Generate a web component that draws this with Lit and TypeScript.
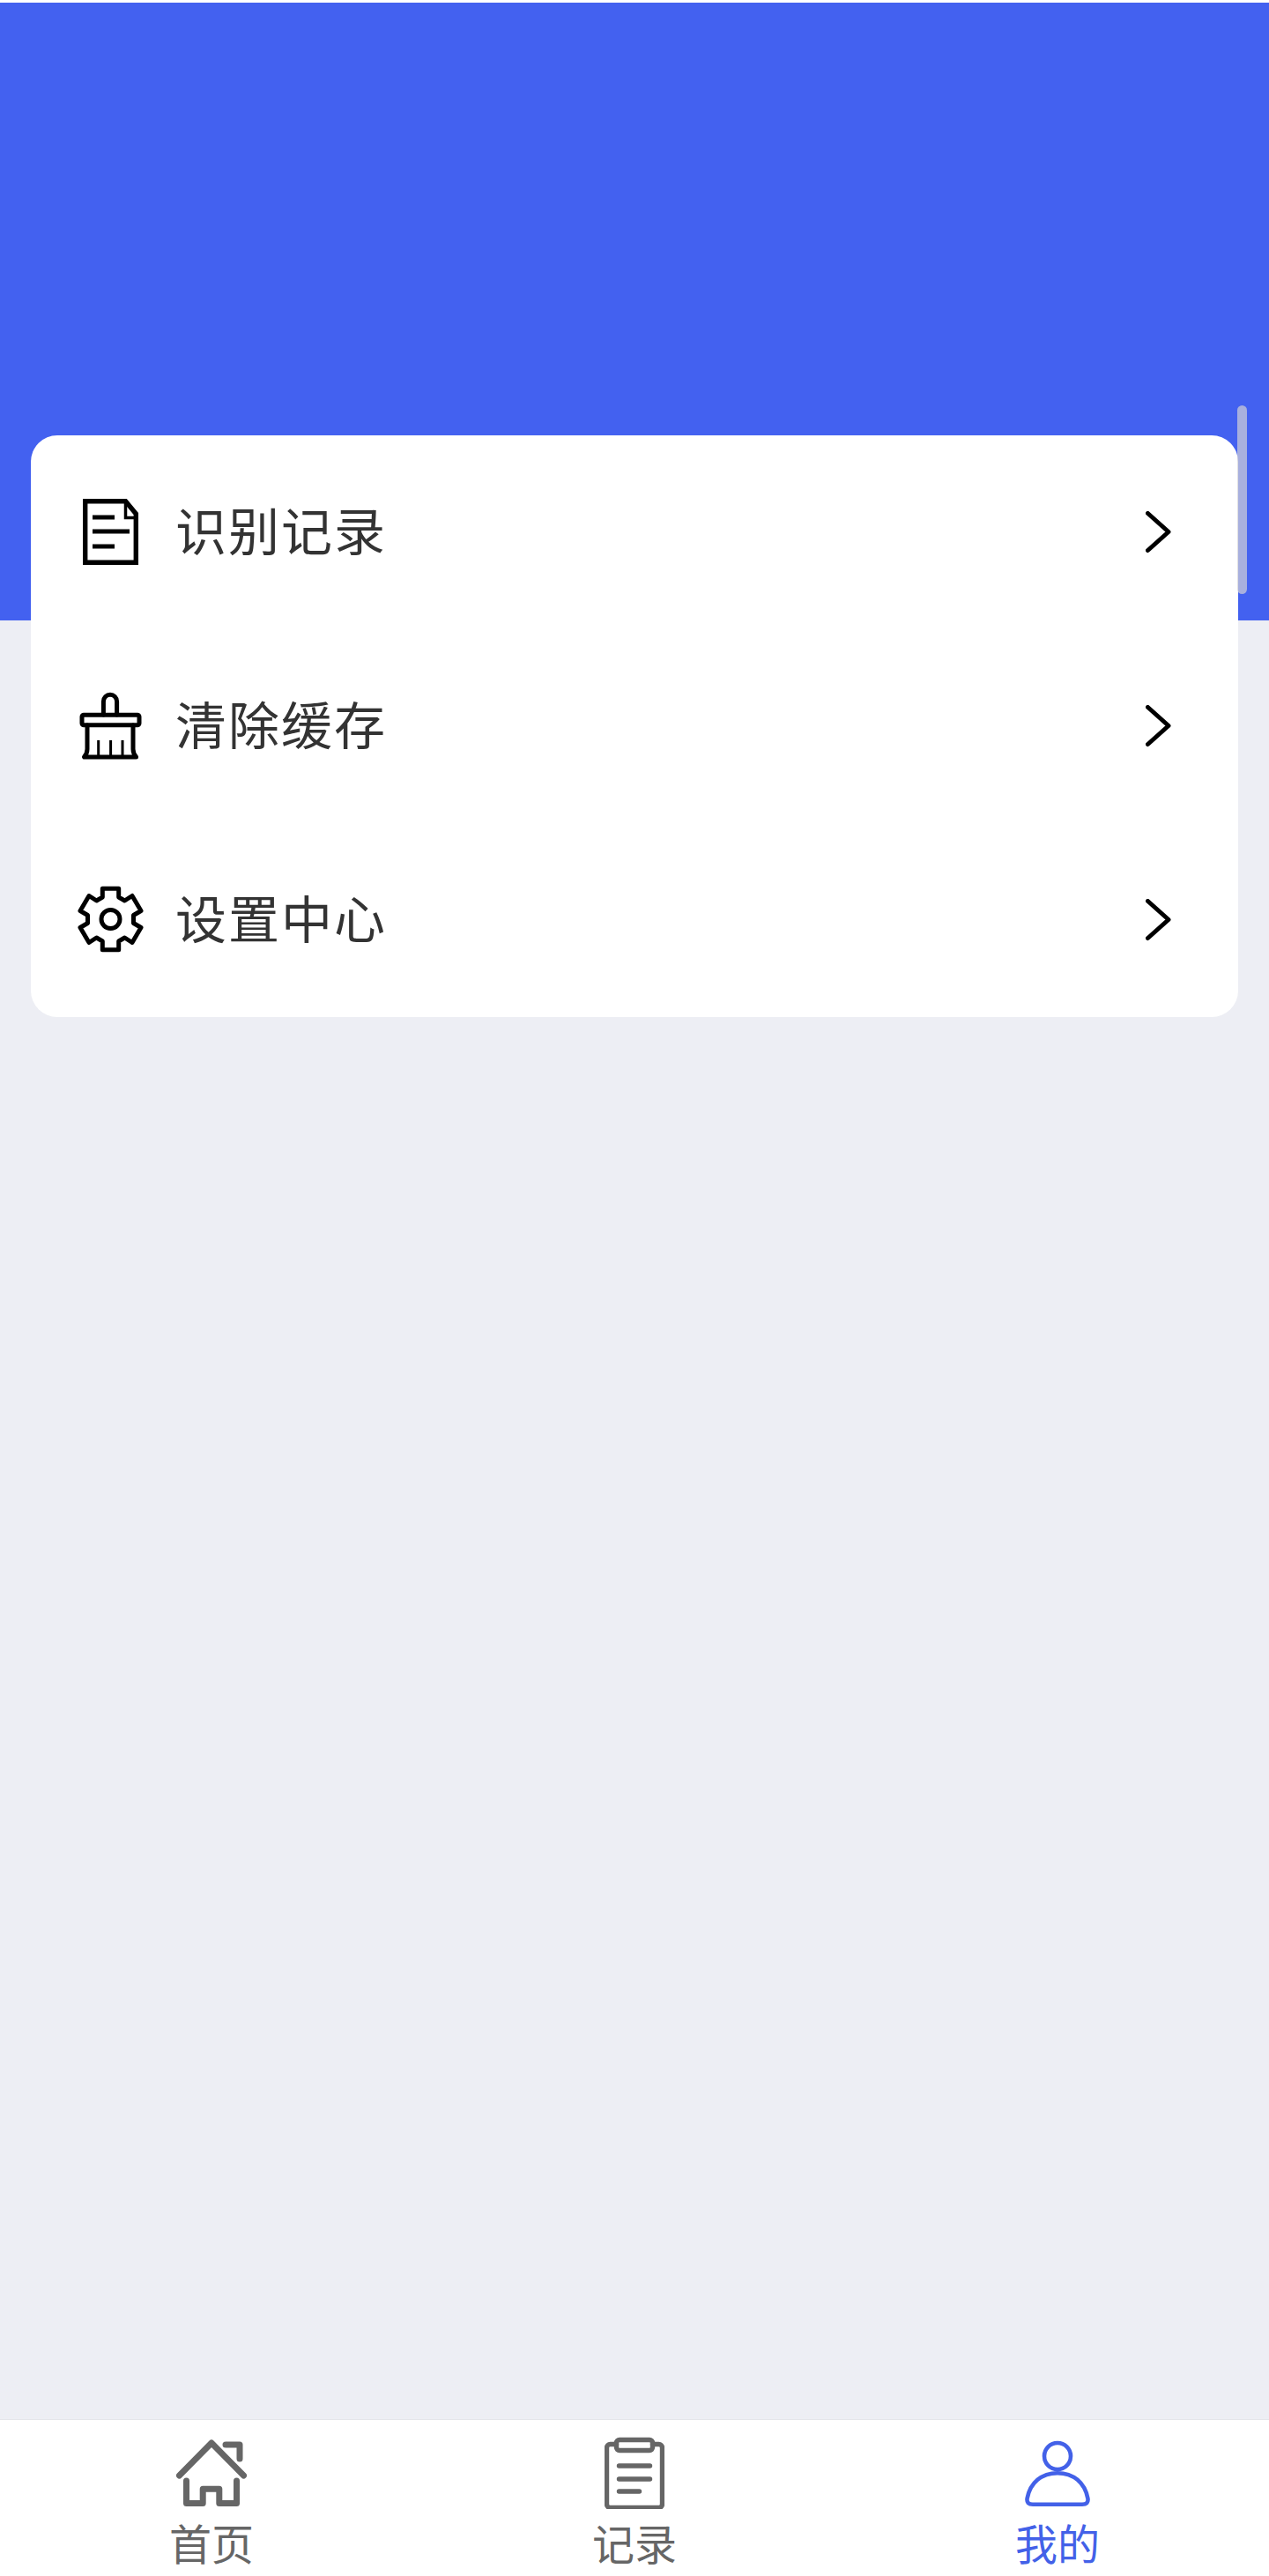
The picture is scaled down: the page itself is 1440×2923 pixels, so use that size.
import { LitElement, html, css, svg } from "lit";
import { customElement } from "lit/decorators.js";

const chevron = svg`<path d="M2.5 2.5 L26 23.5 L2.5 44.5" fill="none" stroke="#000" stroke-width="5" stroke-linecap="round" stroke-linejoin="round"/>`;

const docIcon = svg`<g fill="none" stroke="#000" stroke-width="5.4">
  <path d="M11.7 6.7 H57.5 L69.3 21 V76.3 H11.7 Z"/>
  <path d="M57.5 6 V25.5 H70" stroke-width="3.5"/>
  <path d="M20 25 H45 M20 41 H62 M20 58 H45" stroke-width="5.2"/>
</g>`;

const brushIcon = svg`<g fill="none" stroke="#000" stroke-width="5" stroke-linejoin="round" stroke-linecap="round">
  <path d="M32.4 29 V13.9 a7.6 7.6 0 0 1 15.2 0 V29"/>
  <path d="M10 29.3 H71 a2 2 0 0 1 2 2 V38.7 a2 2 0 0 1 -2 2 H10 a2 2 0 0 1 -2 -2 V31.3 a2 2 0 0 1 2 -2 Z"/>
  <path d="M14 41 V68 Q14 73 10.5 77 H69.5 Q66 73 66 68 V41"/>
  <path d="M26.7 58 V76 M40.6 58 V76 M54 58 V76" stroke-width="3" stroke-linecap="butt"/>
</g>`;

const gearIcon = svg`<g transform="translate(40.5 41)" fill="none" stroke="#000" stroke-width="5" stroke-linejoin="round">
  <path d="M-9.2 -34.7 H9.2 V-25 L16 -21 L24.5 -26.5 L34.5 -9.5 L26 -4.5 V4.5 L34.5 9.5 L24.5 26.5 L16 21 L9.2 25 V34.7 H-9.2 V25 L-16 21 L-24.5 26.5 L-34.5 9.5 L-26 4.5 V-4.5 L-34.5 -9.5 L-24.5 -26.5 L-16 -21 L-9.2 -25 Z"/>
  <circle r="10.5"/>
</g>`;

const homeIcon = svg`<g fill="none" stroke="#666" stroke-width="7" stroke-linecap="round" stroke-linejoin="round">
  <path d="M3.5 46 L40 9 L76.5 46"/>
  <path d="M56 11 H72 V27"/>
  <path d="M11.5 52 V77.5 H30.2 V61.2 H48.8 V77.5 H68.5 V52"/>
</g>`;

const clipIcon = svg`<g fill="none" stroke="#666" stroke-width="5.4" stroke-linejoin="round" stroke-linecap="round">
  <path d="M13.5 10.5 H6.5 a4 4 0 0 0 -4 4 V78.5 a4 4 0 0 0 4 4 H61.5 a4 4 0 0 0 4 -4 V14.5 a4 4 0 0 0 -4 -4 H54.5"/>
  <rect x="13.5" y="5.5" width="41" height="12" rx="3.5"/>
  <path d="M16.5 35 H51.5 M16.5 50 H51.5 M16.5 64 H39.5"/>
</g>`;

const personIcon = svg`<g fill="none" stroke="#4361e8" stroke-width="4.6" stroke-linejoin="round">
  <circle cx="37" cy="24" r="15"/>
  <path d="M37 43.2 C19 43.2 6 54 2.6 72 Q1.6 78.8 9 78.8 H65 Q72.4 78.8 71.4 72 C68 54 55 43.2 37 43.2 Z"/>
</g>`;

const rows = [
  { label: "识别记录", icon: docIcon },
  { label: "清除缓存", icon: brushIcon },
  { label: "设置中心", icon: gearIcon },
];

const tabs = [
  { label: "首页", icon: homeIcon, vb: "0 0 80 84", w: 80, active: false },
  { label: "记录", icon: clipIcon, vb: "0 0 68 84", w: 68, active: false },
  { label: "我的", icon: personIcon, vb: "0 0 74 84", w: 74, active: true },
];

@customElement("app-root")
export class AppRoot extends LitElement {
  static styles = css`
    :host {
      display: block;
      width: 1440px;
      height: 2923px;
      font-family: "Noto Sans CJK SC", "Noto Sans", sans-serif;
    }
    .page {
      position: relative;
      display: flex;
      flex-direction: column;
      width: 1440px;
      height: 2923px;
      background: #edeef4;
      overflow: hidden;
    }
    .hero {
      height: 704px;
      flex: none;
      background: #4361f0;
      box-sizing: border-box;
      border-top: 3px solid #fff;
    }
    .content {
      flex: 1;
      min-height: 0;
      padding: 0 35px;
      margin-top: -210px;
    }
    .card {
      background: #fff;
      border-radius: 30px;
      display: flex;
      flex-direction: column;
    }
    .row {
      height: 220px;
      display: flex;
      align-items: center;
      padding: 0 75px 0 50px;
    }
    .row-icon {
      display: block;
      flex: none;
    }
    .row-label {
      margin-left: 34px;
      flex: 1;
      font-size: 58px;
      letter-spacing: 2px;
      line-height: 84px;
      padding-bottom: 8px;
      color: #333;
    }
    .chev {
      flex: none;
      display: block;
    }
    .scroll {
      position: absolute;
      left: 1404px;
      top: 460px;
      width: 11px;
      height: 214px;
      border-radius: 6px;
      background: rgba(211, 210, 214, 0.7);
    }
    .tabbar {
      flex: none;
      height: 178px;
      box-sizing: border-box;
      background: #fff;
      border-top: 1px solid #e4e5ea;
      display: grid;
      grid-template-columns: repeat(3, 480px);
    }
    .tab {
      display: flex;
      flex-direction: column;
      align-items: center;
      padding-top: 17px;
    }
    .tab svg {
      display: block;
      flex: none;
    }
    .tab-label {
      font-size: 48px;
      line-height: 64px;
      color: #666;
      margin-top: 5px;
    }
    .tab.active .tab-label {
      color: #4361e8;
    }
  `;

  render() {
    return html`
      <div class="page">
        <div class="hero"></div>
        <div class="content">
          <div class="card">
            ${rows.map(
              (r) => html`
                <div class="row">
                  <svg class="row-icon" width="80" height="84" viewBox="0 0 80 84">${r.icon}</svg>
                  <div class="row-label">${r.label}</div>
                  <svg class="chev" width="30" height="48" viewBox="0 0 30 48">${chevron}</svg>
                </div>
              `
            )}
          </div>
        </div>
        <div class="scroll"></div>
        <div class="tabbar">
          ${tabs.map(
            (t) => html`
              <div class="tab ${t.active ? "active" : ""}">
                <svg width=${t.w} height="84" viewBox=${t.vb}>${t.icon}</svg>
                <div class="tab-label">${t.label}</div>
              </div>
            `
          )}
        </div>
      </div>
    `;
  }
}
